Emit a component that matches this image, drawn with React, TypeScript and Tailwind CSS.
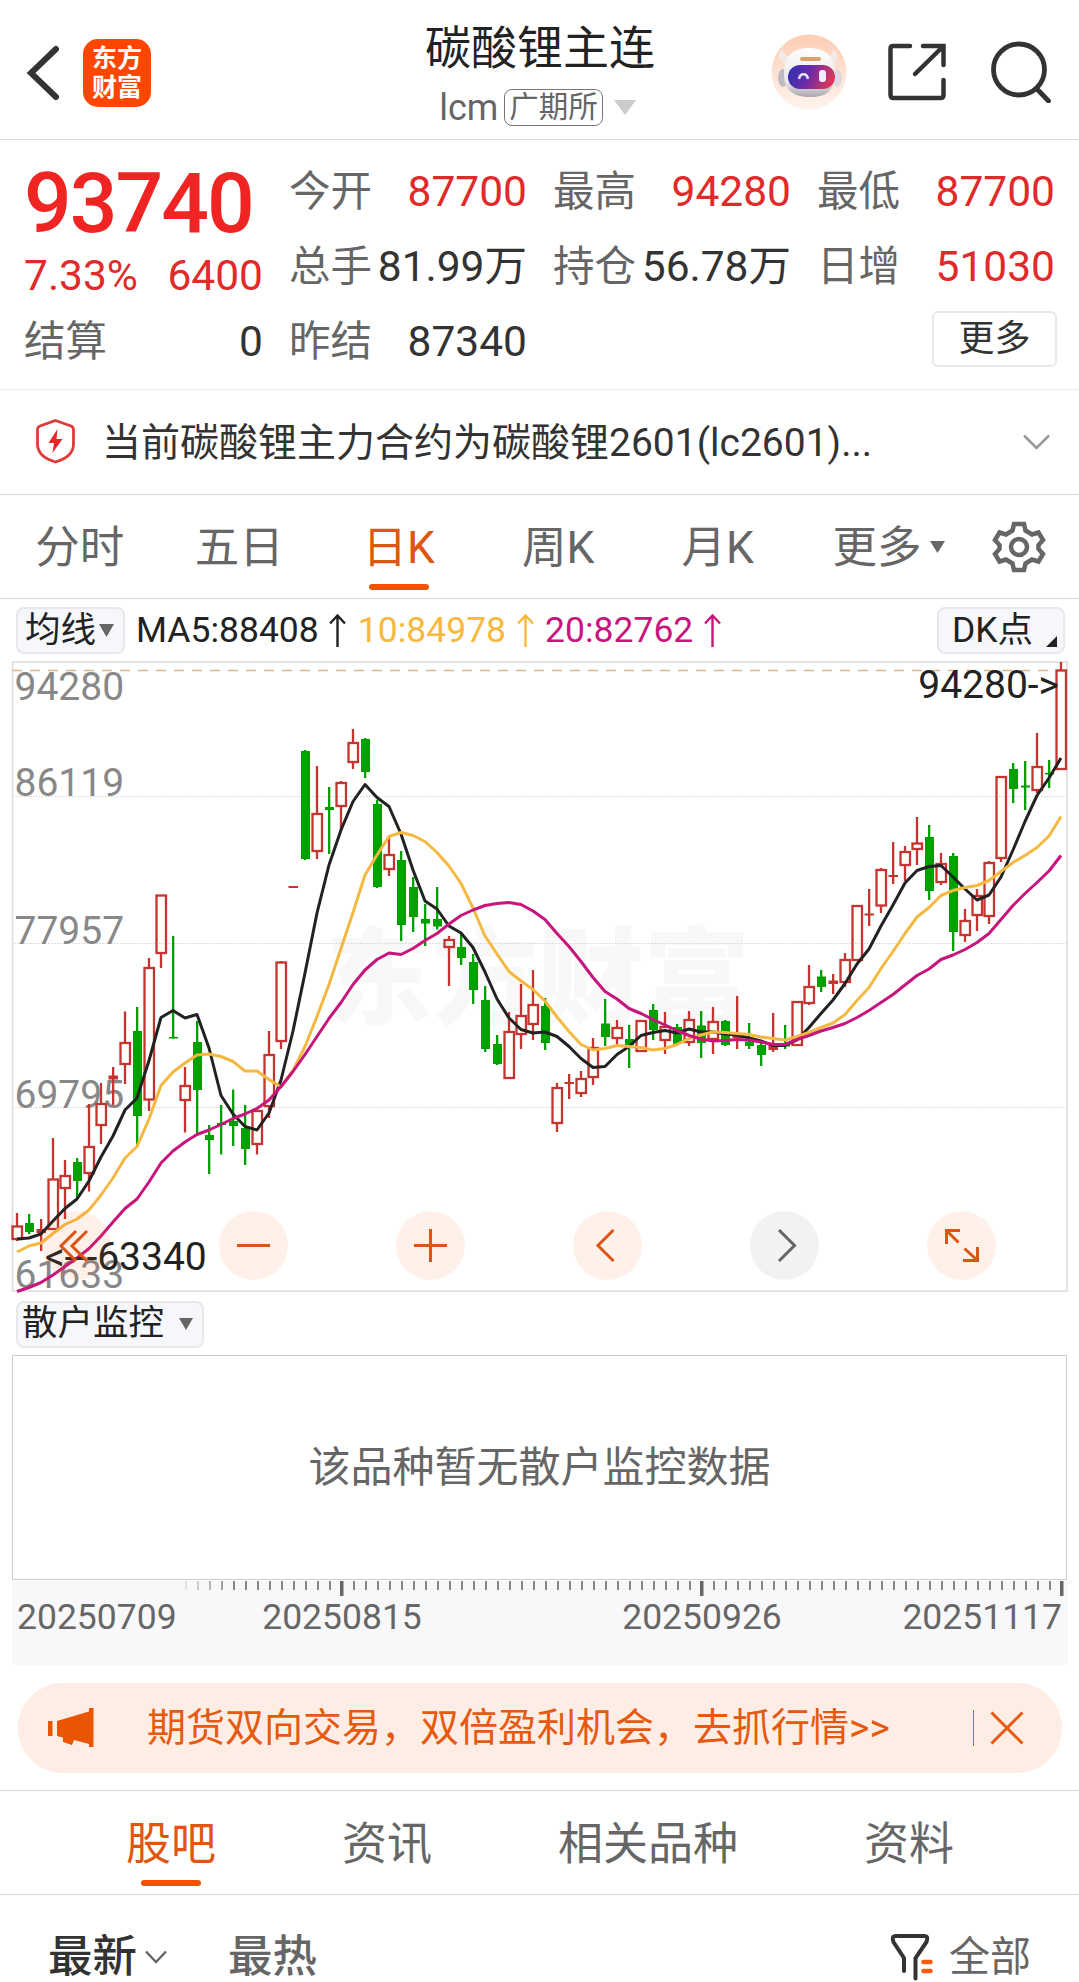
import type { ReactNode } from "react";

type Candle = ["r" | "g", number, number, number, number];

// direction, high, body top, body bottom, low
const candles: Candle[] = [
  ["r", 1213, 1226.5, 1239, 1241],
  ["g", 1214, 1223, 1232, 1234],
  ["r", 1219, 1230, 1232, 1251],
  ["r", 1138, 1179.5, 1229, 1229],
  ["r", 1160, 1176, 1188, 1219],
  ["g", 1158, 1162, 1181, 1199],
  ["r", 1104, 1147, 1173, 1191.5],
  ["r", 1083, 1104, 1125, 1144],
  ["r", 1067, 1076.5, 1078.5, 1105],
  ["r", 1011.5, 1043, 1064, 1084],
  ["g", 1007, 1031, 1116, 1147],
  ["r", 958, 968, 1099.5, 1111],
  ["r", 895, 895.5, 953, 968],
  ["g", 936, 1037, 1038.5, 1038.5],
  ["r", 1067, 1086, 1100, 1132.5],
  ["g", 1021, 1042, 1090, 1134],
  ["g", 1125, 1135, 1140, 1174],
  ["g", 1105, 1123, 1125, 1154.5],
  ["g", 1089.5, 1121, 1126, 1146],
  ["g", 1105, 1128, 1149, 1165],
  ["r", 1111, 1111, 1144, 1154.5],
  ["r", 1031, 1055, 1106, 1118],
  ["r", 961, 962.5, 1041, 1049],
  ["r", 887, 887, 887, 887],
  ["g", 750, 751, 859, 860],
  ["r", 766, 814, 851, 859],
  ["g", 787, 807, 810, 854],
  ["r", 781, 783, 806, 830],
  ["r", 729, 743, 762, 769],
  ["g", 738, 739, 772, 778],
  ["g", 800, 804, 887, 888],
  ["r", 837, 855, 869, 876],
  ["g", 851, 860, 925, 941],
  ["g", 877, 887, 917, 932],
  ["g", 904, 919, 923.5, 946],
  ["g", 887, 919, 926.5, 929.5],
  ["r", 936, 940, 947, 986],
  ["g", 933, 947, 958, 965],
  ["g", 954, 962, 990, 1004],
  ["g", 986, 1000, 1049, 1052],
  ["g", 1035, 1044, 1064, 1065],
  ["r", 1012, 1032, 1078, 1079],
  ["r", 984, 1016, 1034, 1049],
  ["r", 970, 1005, 1024, 1040],
  ["g", 998, 1006, 1043, 1050],
  ["r", 1083, 1088, 1123, 1132],
  ["r", 1074, 1083, 1083, 1099],
  ["r", 1071, 1079, 1093, 1097],
  ["r", 1038, 1048, 1077, 1085],
  ["g", 999, 1023.5, 1037, 1046],
  ["r", 1020, 1028, 1038, 1047],
  ["g", 1025, 1039, 1045, 1068],
  ["r", 1021, 1021, 1051, 1051],
  ["g", 1004, 1010, 1030, 1040],
  ["r", 1012, 1027, 1040, 1054],
  ["g", 1024, 1027, 1044, 1044],
  ["r", 1011, 1020, 1042, 1046],
  ["g", 1011, 1025.5, 1043, 1058],
  ["r", 1007, 1022, 1039, 1054],
  ["g", 1020, 1021, 1045, 1046],
  ["r", 996, 1036, 1037, 1049],
  ["g", 1023, 1041.5, 1046, 1049],
  ["g", 1043, 1045, 1055, 1066],
  ["r", 1013, 1047, 1049, 1052],
  ["g", 1025, 1043, 1046.5, 1049],
  ["r", 1002, 1002, 1045, 1045],
  ["r", 965, 987, 1003, 1005],
  ["g", 970, 976.5, 987, 992],
  ["r", 974, 981.5, 983, 994],
  ["r", 953, 960, 982, 987],
  ["r", 906, 906, 960, 960],
  ["r", 889, 914.5, 914.5, 926],
  ["r", 868, 870, 905.5, 913],
  ["r", 842, 876, 876, 884],
  ["r", 846, 852, 865, 881],
  ["r", 817, 843.5, 849, 865],
  ["g", 825, 837, 891, 900],
  ["r", 853, 864, 882, 885],
  ["g", 853, 856, 932, 951],
  ["r", 909, 921, 935, 942],
  ["r", 889, 896, 915, 931],
  ["r", 861, 863, 916, 924],
  ["r", 777, 777, 858, 862],
  ["g", 763, 769, 789, 803],
  ["g", 761, 785.5, 787.5, 810],
  ["r", 733, 767, 790, 793],
  ["g", 760, 773, 774.5, 788],
  ["r", 662, 670.5, 769, 769],
];

const ma5 = [
  1239, 1238, 1234, 1221, 1208.5, 1199, 1181, 1157, 1136, 1110, 1098, 1060.5, 1017.5, 1010.5, 1018, 1014.5,
  1048, 1095.5, 1114, 1126.5, 1130, 1113, 1080, 1031, 973, 913, 865, 830, 801.5, 784.5, 797.5, 806.5, 834, 870,
  901, 909, 926, 933, 947.5, 972, 999, 1018, 1029.5, 1033, 1032, 1036.5, 1046.5, 1058.5, 1067.5, 1066.5, 1054.5,
  1046.5, 1035.5, 1032.5, 1030.5, 1033, 1029, 1032, 1032, 1034, 1035, 1038, 1041, 1045.5, 1045.5, 1040, 1027.5,
  1013.5, 1000, 983.5, 964, 949, 926, 905, 883, 870.5, 866.5, 865.5, 877, 889, 900, 895, 877, 850, 821.5, 795.5,
  778, 758,
];

const ma10 = [
  1252, 1246, 1243, 1233.5, 1224.5, 1219, 1210, 1195, 1178, 1158, 1146.5, 1119, 1085.5, 1072, 1063, 1055, 1054,
  1056.5, 1061.5, 1071, 1071, 1079.5, 1087, 1070.5, 1046.5, 1016.5, 984.5, 948.5, 912.5, 875, 855, 836.5, 832.5,
  835.5, 841.5, 852.5, 866, 883.5, 908, 936, 954, 971.5, 981, 989.5, 1001, 1017, 1031.5, 1044.5, 1050, 1048.5,
  1045.5, 1046.5, 1047.5, 1050, 1048.5, 1044.5, 1038.5, 1035, 1032, 1032.5, 1033.5, 1034.5, 1037, 1038.5, 1040,
  1036.5, 1032.5, 1027.5, 1023, 1014.5, 1000.5, 987.5, 968.5, 951.5, 933.5, 917, 907.5, 895.5, 890.5, 887.5, 885.5,
  880.5, 871.5, 862.5, 855.5, 847.5, 836, 816.5,
];

const ma20 = [
  1291.5, 1287.5, 1282.5, 1275, 1266.5, 1258, 1248.5, 1236, 1222, 1208.5, 1199, 1182, 1163, 1151, 1142, 1134.5,
  1130, 1124.5, 1118.5, 1114, 1108.5, 1100, 1086.5, 1071.5, 1054.5, 1036.5, 1018.5, 1002.5, 984.5, 970, 959.5, 953,
  954.5, 948.5, 940.5, 933.5, 924, 915.5, 910, 905.5, 903.5, 902.5, 904.5, 911, 919.5, 933.5, 946.5, 961.5, 977.5,
  991.5, 999, 1008.5, 1013.5, 1019.5, 1025, 1030.5, 1035.5, 1039, 1041, 1040.5, 1039.5, 1040, 1042, 1044.5, 1044.5,
  1039.5, 1035.5, 1031, 1027.5, 1023.5, 1017.5, 1010.5, 1002.5, 994.5, 985, 975.5, 969, 959.5, 955, 949.5, 942.5,
  933.5, 919.5, 905.5, 893.5, 882.5, 871, 855.5,
];

const stepX = (i: number) => 17 + i * 12;
const toPoints = (values: number[]) => values.map((y, i) => `${stepX(i)},${y}`).join(" ");

const axisLabels: [string, number][] = [
  ["94280", 700],
  ["86119", 795.5],
  ["77957", 943.5],
  ["69795", 1107.5],
  ["61633", 1288],
];

function CandleShape({ candle, x }: { candle: Candle; x: number }) {
  const [dir, high, top, bottom, low] = candle;
  if (dir === "g") {
    return (
      <g fill="#00a000">
        <rect x={x - 1} y={high} width={2.3} height={Math.max(low - high, 1)} />
        <rect x={x - 4} y={top} width={9} height={Math.max(bottom - top, 1.5)} />
      </g>
    );
  }
  if (bottom - top < 4) {
    return (
      <g fill="#c43430">
        <rect x={x - 1} y={high} width={2.3} height={low - high} />
        <rect x={x - 4.5} y={top - 1} width={9.5} height={bottom - top + 2} />
      </g>
    );
  }
  return (
    <g stroke="#c43430" strokeWidth={2.3} fill="none">
      <path d={`M${x} ${high}V${top}M${x} ${bottom}V${low}`} />
      <rect x={x - 4.5} y={top} width={9.5} height={bottom - top} />
    </g>
  );
}

function KLineChart() {
  return (
    <svg className="block" width={1079} height={632} viewBox="0 661 1079 632">
      <text x={538} y={1016} textAnchor="middle" fontSize={106} fontWeight={900} fill="#f8f8f8">
        东方财富
      </text>
      {[796.5, 943.5, 1107.5].map((y) => (
        <path key={y} d={`M12 ${y}H1067`} stroke="#d4d4d4" strokeDasharray="1.5 1.5" />
      ))}
      <rect x={12.5} y={662} width={1054.5} height={629} fill="none" stroke="#e3e3e3" strokeWidth={2} />
      <path d="M12 670.5H1060" stroke="#dcb88c" strokeWidth={1.5} strokeDasharray="10 8" />
      {axisLabels.map(([label, y]) => (
        <text key={label} x={14.5} y={y} fontSize={39} fill="#888">
          {label}
        </text>
      ))}
      {candles.map((candle, i) => (
        <CandleShape key={i} candle={candle} x={stepX(i)} />
      ))}
      <g fill="none" strokeWidth={3} strokeLinejoin="round">
        <polyline points={toPoints(ma5)} stroke="#222" />
        <polyline points={toPoints(ma10)} stroke="#f5b942" />
        <polyline points={toPoints(ma20)} stroke="#c8147d" />
      </g>
      <g fontSize={39} fill="#222">
        <text x={1059} y={698} textAnchor="end">{"94280->"}</text>
        <text x={45} y={1269.5}>{"<---63340"}</text>
      </g>
    </svg>
  );
}

const chartTools = [
  { name: "first", path: "M34 20 19 35 34 50M45 20 30 35 45 50" },
  { name: "minus", path: "M18 34.5H51" },
  { name: "plus", path: "M18 34.5H51M34.5 18V51" },
  { name: "prev", path: "M40.5 19 25 34.5 40.5 50" },
  { name: "next", path: "M29 19 44.5 34.5 29 50", muted: true },
  { name: "expand", path: "M19.5 33V19.5H33M19.5 19.5 31.5 31.5M50.5 36V49.5H36M50.5 49.5 37.5 37.5" },
];

function ChartTools() {
  return (
    <div className="absolute bottom-[13px] left-[42px] flex gap-[108px]">
      {chartTools.map((tool) => (
        <button
          key={tool.name}
          className={
            tool.muted
              ? "size-[69px] rounded-full bg-black/5 text-[#666]"
              : "size-[69px] rounded-full bg-[#ff6414]/9 text-[#dc5512]"
          }
        >
          <svg viewBox="0 0 69 69" fill="none" stroke="currentColor" strokeWidth={3}>
            <path d={tool.path} />
          </svg>
        </button>
      ))}
    </div>
  );
}

function Caret({ className }: { className: string }) {
  return (
    <svg className={className} viewBox="0 0 14 12" preserveAspectRatio="none" fill="currentColor">
      <path d="M0 0H14L7 12Z" />
    </svg>
  );
}

function UpArrow() {
  return (
    <svg className="mr-[11.500px] mb-[2px] ml-[10.500px] h-[33px] w-[17px]" viewBox="0 0 17 33" fill="none" stroke="currentColor" strokeWidth={2.4}>
      <path d="M8.500 33V2M1 9.500 8.500 1.500 16 9.500" />
    </svg>
  );
}

function RobotAvatar() {
  return (
    <svg className="h-[76px] w-[76px]" viewBox="0 0 76 76">
      <defs>
        <linearGradient id="halo" x1="0" y1="0" x2="0" y2="1">
          <stop offset="0" stopColor="#ffcdb4" />
          <stop offset="1" stopColor="#fff4ee" />
        </linearGradient>
        <linearGradient id="visor" x1="0" y1="0" x2="1" y2="0.2">
          <stop offset="0" stopColor="#2b31b4" />
          <stop offset="0.5" stopColor="#6c2aa6" />
          <stop offset="1" stopColor="#d8365e" />
        </linearGradient>
        <linearGradient id="helmet" x1="0" y1="0" x2="0" y2="1">
          <stop offset="0" stopColor="#fff" />
          <stop offset="0.7" stopColor="#e8e6e8" />
          <stop offset="1" stopColor="#a9a8ae" />
        </linearGradient>
      </defs>
      <circle cx="38" cy="38" r="37.500" fill="url(#halo)" />
      <path d="M11 15c-5 5-4 13 5 16l7-7c-6 0-11-4-12-9ZM62 15c6 5 6 13-1 16l-8-7c5 0 9-4 9-9Z" fill="#f3eae7" />
      <ellipse cx="12" cy="44" rx="5" ry="9" fill="#bdbcc4" />
      <ellipse cx="66" cy="44" rx="5" ry="9" fill="#dcdae0" />
      <path d="M38 14c17 0 26 9 26 26 0 16-8 23-25 23S13 56 13 40c0-17 8-26 25-26Z" fill="url(#helmet)" />
      <rect x="29" y="23" width="21" height="4" rx="2" fill="#dba070" />
      <rect x="17" y="31" width="47" height="24" rx="12" fill="url(#visor)" />
      <path d="M28 45c1-6.500 8-6.500 9 0" fill="none" stroke="#dfe6ff" strokeWidth="2.500" />
      <rect x="48" y="36" width="7" height="12" rx="3" fill="#f6e9ff" />
    </svg>
  );
}

function Header() {
  return (
    <header className="grid h-[140px] grid-cols-[1fr_auto_1fr] border-b border-[#dadada]">
      <div className="flex items-center pt-[6px] pl-[26px]">
        <svg className="h-[56px] w-[34px]" viewBox="0 0 34 56" fill="none" stroke="#333" strokeWidth={6}>
          <path d="M30 4 5 28 30 52" strokeLinecap="round" />
        </svg>
        <div className="ml-[23px] flex h-[68px] w-[68px] flex-col items-center justify-center rounded-[15px] bg-[#ff4600] text-[25px] leading-[29px] font-bold text-white">
          <span>东方</span>
          <span>财富</span>
        </div>
      </div>
      <div className="flex flex-col items-center">
        <h1 className="mt-[17px] ml-[1px] text-[46px] leading-[62px] text-[#222]">碳酸锂主连</h1>
        <div className="mt-[5px] mr-[4px] flex h-[46px] items-center text-[36px] text-[#666]">
          <span className="mt-[2px]">lcm</span>
          <span className="ml-[6px] flex h-[37px] items-center rounded-lg border border-[#777] px-[4px] text-[29.500px]">
            广期所
          </span>
          <Caret className="ml-[11px] h-[15px] w-[22px] text-[#ccc]" />
        </div>
      </div>
      <div className="flex items-center justify-end pt-[5px] pr-[27px] text-[#333]">
        <RobotAvatar />
        <svg className="ml-[40px] h-[60px] w-[60px]" viewBox="0 0 60 60" fill="none" stroke="currentColor" strokeWidth={4.5} strokeLinecap="round">
          <path d="M23 4H6Q3.500 4 3.500 6.500V53Q3.500 56 6.500 56H53.500Q56.500 56 56.500 53V38M36 4H56.500V23M55 5.500 28 32" />
        </svg>
        <svg className="ml-[43px] h-[62px] w-[62px]" viewBox="0 0 62 62" fill="none" stroke="currentColor" strokeWidth={4.8} strokeLinecap="round">
          <circle cx="29" cy="28.500" r="25.500" />
          <path d="M47 48 58.500 60" />
        </svg>
      </div>
    </header>
  );
}

function Stat({ label, value, red }: { label: string; value: string; red?: boolean }) {
  return (
    <div className="flex items-center justify-between whitespace-nowrap">
      <span className="text-[41.500px] text-[#666]">{label}</span>
      <span className={red ? "text-[#e12a2a]" : "text-[#333]"}>{value}</span>
    </div>
  );
}

function Quote() {
  return (
    <section className="flex h-[250px] gap-[26px] border-b border-[#eee] pt-[14px] pr-[24px] pl-[24px] text-[42.500px] leading-[75px]">
      <div className="w-[239px]">
        <div className="mt-[10px] h-[83px] text-[84px] leading-[80px] font-medium tracking-[-2px] text-[#f12424]">93740</div>
        <div className="flex h-[57px] items-center justify-between text-[#e12a2a]">
          <span>7.33%</span>
          <span>6400</span>
        </div>
        <Stat label="结算" value="0" />
      </div>
      <div className="grid flex-1 auto-rows-[75px] grid-cols-3 gap-x-[26px]">
        <Stat label="今开" value="87700" red />
        <Stat label="最高" value="94280" red />
        <Stat label="最低" value="87700" red />
        <Stat label="总手" value="81.99万" />
        <Stat label="持仓" value="56.78万" />
        <Stat label="日增" value="51030" red />
        <Stat label="昨结" value="87340" />
        <button className="col-start-3 mt-[7px] mr-[-2px] flex h-[56px] w-[125px] items-center justify-center self-start justify-self-end rounded-md border-2 border-[#e8e8e8] text-[36px] text-[#333]">
          更多
        </button>
      </div>
    </section>
  );
}

function Notice() {
  return (
    <section className="flex h-[105px] items-center border-b border-[#d8d8d8] pr-[29px] pl-[35px]">
      <svg className="mb-[2px] h-[46px] w-[41px]" viewBox="0 0 41 46">
        <path
          d="M20.500 2.500 36 8Q38.500 9 38.500 11.500V26C38.500 35 31 41 20.500 44 10 41 2.500 35 2.500 26V11.500Q2.500 9 5 8Z"
          fill="none"
          stroke="#e03a3a"
          strokeWidth={2.8}
        />
        <path d="M22.500 11 13.500 25H19L17.500 35 27.500 21H21.500Z" fill="#e8262a" />
      </svg>
      <p className="mt-[3px] ml-[26px] flex-1 text-[39px] text-[#333]">当前碳酸锂主力合约为碳酸锂2601(lc2601)...</p>
      <svg className="h-[16px] w-[27px]" viewBox="0 0 27 16" fill="none" stroke="#999" strokeWidth={2.5}>
        <path d="M1 1.500 13.500 14 26 1.500" />
      </svg>
    </section>
  );
}

function PeriodTabs() {
  return (
    <nav className="flex h-[104px] items-center border-b border-[#d8d8d8] pt-[4px] text-[44.500px] text-[#666]">
      {["分时", "五日", "日K", "周K", "月K"].map((tab) => (
        <div
          key={tab}
          className={
            tab === "日K"
              ? "relative w-[159.500px] text-center text-[#e0560f]"
              : "w-[159.500px] text-center"
          }
        >
          {tab}
          {tab === "日K" && (
            <span className="absolute -bottom-[8px] left-1/2 h-[6px] w-[60px] -translate-x-1/2 rounded-full bg-[#ea5504]" />
          )}
        </div>
      ))}
      <span className="ml-[35px]">更多</span>
      <Caret className="mb-[4px] ml-[8px] h-[12px] w-[15px]" />
      <svg className="mb-[4px] ml-[47px] h-[54px] w-[54px]" viewBox="0 0 54 54" fill="none" stroke="currentColor" strokeWidth={4.5}>
        <path d="M22 4H32L33.500 10.500 40 14.500 46.500 12.500 51 20 46.500 25V29L51 34 46.500 41.500 40 39.500 33.500 43.500 32 50H22L20.500 43.500 14 39.500 7.500 41.500 3 34 7.500 29V25L3 20 7.500 12.500 14 14.500 20.500 10.500Z" />
        <circle cx="27" cy="27" r="8" />
      </svg>
    </nav>
  );
}

function Pill({ children, className }: { children: ReactNode; className: string }) {
  return (
    <div className={`flex h-[47px] items-center rounded-lg border-2 border-[#e6e8ec] bg-[#f6f7fa] text-[35.500px] text-[#222] ${className}`}>
      {children}
    </div>
  );
}

function AverageRow() {
  return (
    <div className="flex h-[62px] items-center pr-[14px] pl-[16px] text-[35.500px]">
      <Pill className="w-[109px] pl-[7px]">
        <span className="mt-[2px]">均线</span>
        <Caret className="ml-[3px] h-[13px] w-[15px] text-[#666]" />
      </Pill>
      <div className="mt-[2px] ml-[11px] flex flex-1 items-center">
        <span className="flex items-center text-[#222]">MA5:88408<UpArrow /></span>
        <span className="flex items-center text-[#f8b840]">10:84978<UpArrow /></span>
        <span className="flex items-center text-[#c8147d]">20:82762<UpArrow /></span>
      </div>
      <Pill className="w-[128px] pl-[13px]">
        <span className="mt-[2px]">DK点</span>
        <svg className="mt-[22px] ml-[13px] size-[11px]" viewBox="0 0 11 11" fill="#222">
          <path d="M11 0V11H0Z" />
        </svg>
      </Pill>
    </div>
  );
}

function Timeline() {
  return (
    <svg className="mx-[12px] mt-[1px] block bg-[#f8f8fb]" width={1056} height={84} viewBox="12 1581 1056 84">
      {candles.map((_, i) => {
        if (i < 14) return null;
        const major = i === 27 || i === 57 || i === 87;
        return (
          <rect
            key={i}
            x={stepX(i) - (major ? 1 : 0)}
            y={1581}
            width={major ? 3.5 : 2}
            height={major ? 15 : 9}
            fill={major ? "#666" : "#888"}
            opacity={Math.min(1, (i - 13) * 0.2)}
          />
        );
      })}
      <g fontSize={35.5} fill="#666">
        <text x={17} y={1628.5}>20250709</text>
        <text x={342} y={1628.5} textAnchor="middle">20250815</text>
        <text x={702} y={1628.5} textAnchor="middle">20250926</text>
        <text x={1062} y={1628.5} textAnchor="end">20251117</text>
      </g>
    </svg>
  );
}

function Banner() {
  return (
    <section className="mr-[17px] ml-[18px] mt-[18px] flex h-[90px] items-center rounded-full bg-[#fdede4] pr-[38px] pl-[30px] text-[#e55a10]">
      <svg className="h-[40px] w-[46px]" viewBox="0 0 46 40" fill="#ea5504">
        <path d="M0 13H4.500V28H0ZM9 13 41 3.500V0H45.500V39H41V36L26 32 24 37 15 34V29.500L9 28Z" />
      </svg>
      <p className="ml-[53px] flex-1 text-[39px]">期货双向交易，双倍盈利机会，去抓行情&gt;&gt;</p>
      <span className="h-[36px] w-px bg-[#e55a10]" />
      <svg className="ml-[16px] size-[34px]" viewBox="0 0 34 34" stroke="currentColor" strokeWidth={3}>
        <path d="M1.500 1.500 32.500 32.500M32.500 1.500 1.500 32.500" />
      </svg>
    </section>
  );
}

function SectionTabs() {
  return (
    <nav className="mt-[17px] flex h-[105px] items-center border-y border-[#d8d8d8] pt-[5px] pl-[126px] text-[45px] text-[#666]">
      <div className="relative text-[#e0560f]">
        股吧
        <span className="absolute -bottom-[7px] left-1/2 h-[6px] w-[60px] -translate-x-1/2 rounded-full bg-[#ea5504]" />
      </div>
      <span className="ml-[126px]">资讯</span>
      <span className="ml-[126px]">相关品种</span>
      <span className="ml-[126px]">资料</span>
    </nav>
  );
}

function PostFilter() {
  return (
    <div className="flex h-[87px] items-center overflow-hidden pt-[37px] pr-[48px] pl-[48px] text-[44.500px] leading-[50px] font-medium">
      <span className="text-[#333]">最新</span>
      <svg className="ml-[8px] h-[14px] w-[22px]" viewBox="0 0 22 14" fill="none" stroke="#666" strokeWidth={2.5}>
        <path d="M1 1.500 11 12 21 1.500" />
      </svg>
      <span className="ml-[61px] flex-1 text-[#666]">最热</span>
      <svg className="h-[48px] w-[44px]" viewBox="0 0 44 48" fill="none" strokeLinecap="round">
        <path d="M14 38V25L3.500 9Q1 3 6 3H34Q39 3 36.500 9L25.500 25V45.500" stroke="#333" strokeWidth={4} />
        <path d="M33.500 29H40.500M33.500 38H40.500" stroke="#ff5a10" strokeWidth={4.5} />
      </svg>
      <span className="ml-[15px] text-[41px] font-normal text-[#666]">全部</span>
    </div>
  );
}

export default function App() {
  return (
    <main className="h-[1982px] w-[1079px] overflow-hidden bg-white font-[Roboto,'Noto_Sans_CJK_SC',sans-serif]">
      <Header />
      <Quote />
      <Notice />
      <PeriodTabs />
      <AverageRow />
      <div className="relative">
        <KLineChart />
        <ChartTools />
      </div>
      <div className="flex h-[62px] items-center pl-[16px]">
        <Pill className="w-[188px] pl-[4px]">
          散户监控
          <Caret className="ml-[15px] h-[12px] w-[14px] text-[#666]" />
        </Pill>
      </div>
      <div className="mx-[12px] flex h-[225px] items-center justify-center border border-[#ccc] text-[42px] text-[#666]">
        该品种暂无散户监控数据
      </div>
      <Timeline />
      <Banner />
      <SectionTabs />
      <PostFilter />
    </main>
  );
}
